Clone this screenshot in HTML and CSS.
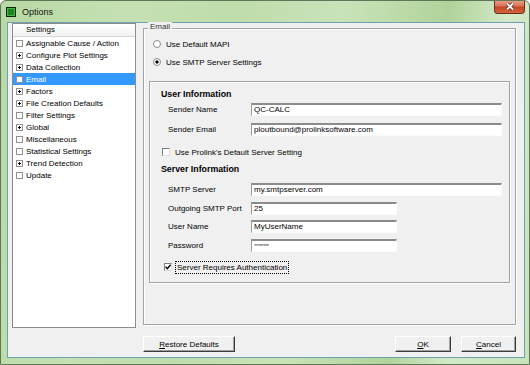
FILE: index.html
```html
<!DOCTYPE html>
<html lang="en">
<head>
    <meta charset="UTF-8">
    <meta name="viewport" content="width=device-width, initial-scale=1.0">
    <title>Options</title>
    <link rel="stylesheet" href="styles.css">
</head>
<body>
<div class="window">
    <div class="titlebar">
        <span class="app-icon"></span>
        <span class="title">Options</span>
        <button class="close-btn" aria-label="Close">
            <svg width="12" height="9" viewBox="0 0 12 9">
                <path d="M3 1.5 L9 7.5 M9 1.5 L3 7.5" stroke="#6b2414" stroke-width="3.4" fill="none"/>
                <path d="M3 1.5 L9 7.5 M9 1.5 L3 7.5" stroke="#fff" stroke-width="1.8" fill="none"/>
            </svg>
        </button>
    </div>

    <div class="client">
        <div class="main">
            <div class="tree">
                <div class="tree-head">Settings</div>
                <div class="tree-item"><span class="box"></span>Assignable Cause / Action</div>
                <div class="tree-item"><span class="box plus"></span>Configure Plot Settings</div>
                <div class="tree-item"><span class="box plus"></span>Data Collection</div>
                <div class="tree-item sel"><span class="box"></span>Email</div>
                <div class="tree-item"><span class="box plus"></span>Factors</div>
                <div class="tree-item"><span class="box plus"></span>File Creation Defaults</div>
                <div class="tree-item"><span class="box"></span>Filter Settings</div>
                <div class="tree-item"><span class="box plus"></span>Global</div>
                <div class="tree-item"><span class="box"></span>Miscellaneous</div>
                <div class="tree-item"><span class="box"></span>Statistical Settings</div>
                <div class="tree-item"><span class="box plus"></span>Trend Detection</div>
                <div class="tree-item"><span class="box"></span>Update</div>
            </div>

            <div class="groupbox">
                <span class="legend">Email</span>
                <div class="opt"><span class="radio"></span>Use Default MAPI</div>
                <div class="opt"><span class="radio on"></span>Use SMTP Server Settings</div>

                <div class="panel">
                    <div class="section">User Information</div>
                    <div class="row first"><span class="lbl">Sender Name</span><span class="field wide">QC-CALC</span></div>
                    <div class="row gap7"><span class="lbl">Sender Email</span><span class="field wide">ploutbound@prolinksoftware.com</span></div>

                    <div class="check prolink"><span class="cbox"></span>Use Prolink's Default Server Setting</div>

                    <div class="section server">Server Information</div>
                    <div class="row gap8"><span class="lbl">SMTP Server</span><span class="field wide">my.smtpserver.com</span></div>
                    <div class="row gap6"><span class="lbl">Outgoing SMTP Port</span><span class="field short">25</span></div>
                    <div class="row gap5"><span class="lbl">User Name</span><span class="field short">MyUserName</span></div>
                    <div class="row gap6"><span class="lbl">Password</span><span class="field short pw">********</span></div>

                    <div class="check auth">
                        <span class="cbox">
                            <svg width="6" height="6" viewBox="0 0 6 6"><path d="M0.5 2.6 L2.3 4.6 L5.6 0.8" stroke="#000" stroke-width="1.4" fill="none"/></svg>
                        </span>
                        <span class="focus">Server Requires Authentication</span>
                    </div>
                </div>
            </div>
        </div>

        <div class="buttons">
            <button class="btn restore"><u>R</u>estore Defaults</button>
            <button class="btn ok"><u>O</u>K</button>
            <button class="btn cancel"><u>C</u>ancel</button>
        </div>
    </div>
</div>
</body>
</html>
```

FILE: styles.css
```css
* {
    box-sizing: border-box;
}
body {
    margin: 0;
    font-family: "Liberation Sans", Arial, sans-serif;
    font-size: 8px;
    color: #000;
    background: #fff;
}
.window {
    width: 530px;
    height: 365px;
    display: flex;
    flex-direction: column;
    border: 1px solid #5d7757;
    border-radius: 6px 6px 0 0;
    background: linear-gradient(100deg, #b8d8a4 0%, #c5e1b4 22%, #bfdcab 40%, #c9e3b9 58%, #b0d39b 76%, #d3e9c7 86%, #c8e3ba 100%);
    overflow: hidden;
}

/* title bar */
.titlebar {
    height: 21px;
    display: flex;
    align-items: center;
    padding-left: 5px;
}
.app-icon {
    width: 10px;
    height: 10px;
    margin-right: 6px;
    border: 1px solid #0d2a0b;
    background: #1d861c;
    box-shadow: inset 0 0 0 1px #49b245;
}
.title {
    font-size: 9px;
    color: #111;
}
.close-btn {
    margin-left: auto;
    margin-right: 4px;
    align-self: flex-start;
    margin-top: -1px;
    width: 31px;
    height: 14px;
    padding: 0;
    border: 1px solid #6e2a1a;
    border-top: none;
    border-radius: 0 0 4px 4px;
    background: linear-gradient(#e9a48d, #d7765a 45%, #c24624 55%, #d4663f);
    display: flex;
    align-items: center;
    justify-content: center;
}

/* client area */
.client {
    flex: 1;
    margin: 0 4px 6px 6px;
    border: 1px solid #6aa3ad;
    background: #f0f0f0;
    padding: 0 8px 5px 4px;
    display: flex;
    flex-direction: column;
}
.main {
    display: flex;
    align-items: flex-start;
    height: 305px;
}

/* settings tree */
.tree {
    width: 124px;
    height: 305px;
    border: 1px solid #8d8d8d;
    background: #fff;
}
.tree-head {
    height: 13px;
    line-height: 12px;
    padding-left: 13px;
    border-bottom: 1px solid #d5d5d5;
    background: linear-gradient(#fff, #f1f1f1);
}
.tree-item {
    height: 12px;
    display: flex;
    align-items: center;
    gap: 3px;
    padding-left: 3px;
}
.tree-item.sel {
    background: #3399ff;
    color: #fff;
}
.box {
    width: 7px;
    height: 7px;
    border: 1px solid #919191;
    background: #fff;
}
.box.plus {
    background:
        linear-gradient(#000, #000) center / 3px 1px no-repeat,
        linear-gradient(#000, #000) center / 1px 3px no-repeat,
        #fff;
}

/* email group */
.groupbox {
    width: 373px;
    height: 297px;
    margin: 5px 0 0 7px;
    border: 1px solid #a3a3a3;
    box-shadow: inset 1px 1px 0 #fff, 1px 1px 0 #fff;
}
.legend {
    display: block;
    width: fit-content;
    margin: -7px 0 0 4px;
    padding: 0 2px;
    line-height: 10px;
    height: 10px;
    background: #f0f0f0;
    color: #333;
}
.opt {
    height: 12px;
    display: flex;
    align-items: center;
    gap: 5px;
    margin: 6px 0 0 9px;
}
.radio {
    width: 8px;
    height: 8px;
    border-radius: 50%;
    border: 1px solid #8a8a8a;
    background: #fff;
}
.radio.on {
    background: radial-gradient(circle, #000 0 1.3px, #fff 1.9px);
}
.panel {
    width: 361px;
    height: 202px;
    margin: 13px 0 0 5px;
    border: 1px solid #a3a3a3;
    box-shadow: inset 1px 1px 0 #fff, 1px 1px 0 #fff;
}
.section {
    font-weight: bold;
    font-size: 8.8px;
    line-height: 12px;
    margin: 6px 0 0 11px;
}
.section.server {
    margin-top: 5px;
}
.row {
    height: 13px;
    display: flex;
    align-items: center;
    margin-left: 18px;
}
.row.first { margin-top: 3px; }
.row.gap7 { margin-top: 7px; }
.row.gap8 { margin-top: 8px; }
.row.gap6 { margin-top: 6px; }
.row.gap5 { margin-top: 5px; }
.lbl {
    width: 83px;
}
.field {
    height: 13px;
    line-height: 10px;
    padding-left: 2px;
    background: #fff;
    border-style: solid;
    border-width: 2px 1px 1px 1px;
    border-color: #8b8b8b #fbfbfb #fbfbfb #9a9a9a;
}
.field.wide { width: 251px; }
.field.short { width: 146px; }
.field.pw {
    font-size: 6px;
    letter-spacing: -0.5px;
    color: #555;
}
.check {
    height: 12px;
    display: flex;
    align-items: center;
}
.check.prolink {
    margin: 10px 0 0 12px;
    gap: 5px;
}
.check.auth {
    margin: 9px 0 0 14px;
    gap: 4px;
}
.cbox {
    width: 8px;
    height: 8px;
    border: 1px solid;
    border-color: #7e7e7e #dcdcdc #dcdcdc #7e7e7e;
    background: #fff;
    display: flex;
    align-items: center;
    justify-content: center;
}
.focus {
    outline: 1px dotted #000;
    padding: 0 1px;
    line-height: 11px;
}

/* bottom buttons */
.buttons {
    display: flex;
    margin-top: 8px;
    height: 16px;
}
.btn {
    height: 16px;
    padding: 0;
    font: inherit;
    color: #000;
    background: #f0f0f0;
    border: 1px solid;
    border-color: #fff #3c3c3c #3c3c3c #fff;
    box-shadow: inset -1px -1px 0 #a0a0a0;
}
.btn.restore {
    width: 92px;
    margin-left: 131px;
}
.btn.ok {
    width: 56px;
    margin-left: auto;
}
.btn.cancel {
    width: 55px;
    margin-left: 10px;
}
```
